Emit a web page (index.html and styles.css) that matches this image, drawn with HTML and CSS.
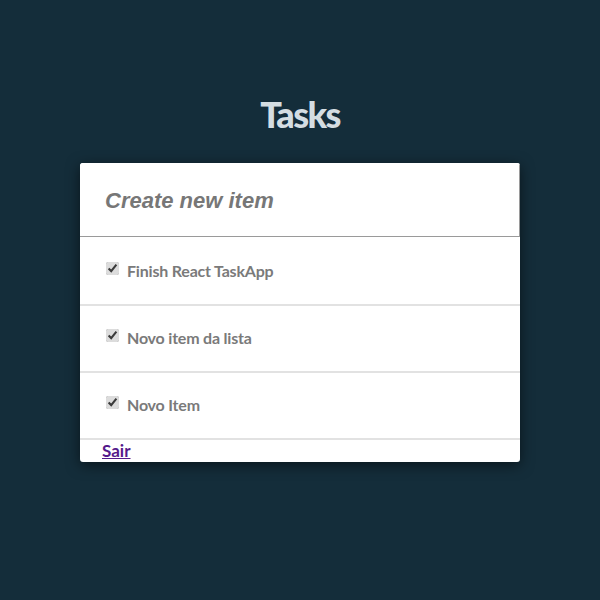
FILE: index.html
```html
<!DOCTYPE html>
<html>
<head>
<meta charset="utf-8">
<link rel="stylesheet" href="styles.css">
</head>
<body>
<h1 class="title">Tasks</h1>
<div class="card">
  <input class="new-item" type="text" placeholder="Create new item">
  <ul class="list">
    <li class="item"><input type="checkbox" class="check" checked><span>Finish React TaskApp</span></li>
    <li class="item"><input type="checkbox" class="check" checked><span>Novo item da lista</span></li>
    <li class="item"><input type="checkbox" class="check" checked><span>Novo Item</span></li>
  </ul>
  <a class="logout" href="#">Sair</a>
</div>
</body>
</html>
```
FILE: styles.css
```css
html, body {
  margin: 0;
  padding: 0;
  background: #142d3a;
  height: 100%;
}
body {
  font-family: Lato, "Liberation Sans", sans-serif;
  padding-top: 96px;
  box-sizing: border-box;
}
.title {
  margin: 0 0 30px;
  text-align: center;
  color: #d4dde2;
  font-size: 36px;
  font-weight: 900;
  line-height: 37px;
  letter-spacing: -1.6px;
}
.card {
  width: 440px;
  margin: 0 auto;
  background: #fff;
  border-radius: 3px;
  box-shadow: 0 3px 14px rgba(0, 0, 0, 0.55);
  overflow: hidden;
}
.new-item {
  display: block;
  width: 440px;
  height: 74px;
  box-sizing: border-box;
  border: none;
  border-right: 1px solid #9a9a9a;
  border-bottom: 1px solid #9a9a9a;
  padding: 2px 0 0 25px;
  font-family: "Liberation Sans", Arial, sans-serif;
  font-style: italic;
  font-weight: bold;
  font-size: 22px;
  color: #777;
  outline: none;
}
.new-item::placeholder {
  color: #777;
}
.list {
  list-style: none;
  margin: 0;
  padding: 2px 0 0;
}
.item {
  display: flex;
  align-items: center;
  height: 67px;
  box-sizing: border-box;
  padding: 0 0 3px 26px;
  border-bottom: 2px solid #e2e2e2;
  font-size: 16px;
  font-weight: bold;
  color: #7a7a7a;
  letter-spacing: -0.2px;
}
.check {
  width: 13px;
  height: 13px;
  margin: 0 8px 3px 0;
  accent-color: #dcdcdc;
}
.logout {
  display: block;
  margin-left: 22px;
  font-size: 17px;
  font-weight: bold;
  line-height: 22px;
  color: #551a8b;
}
```
